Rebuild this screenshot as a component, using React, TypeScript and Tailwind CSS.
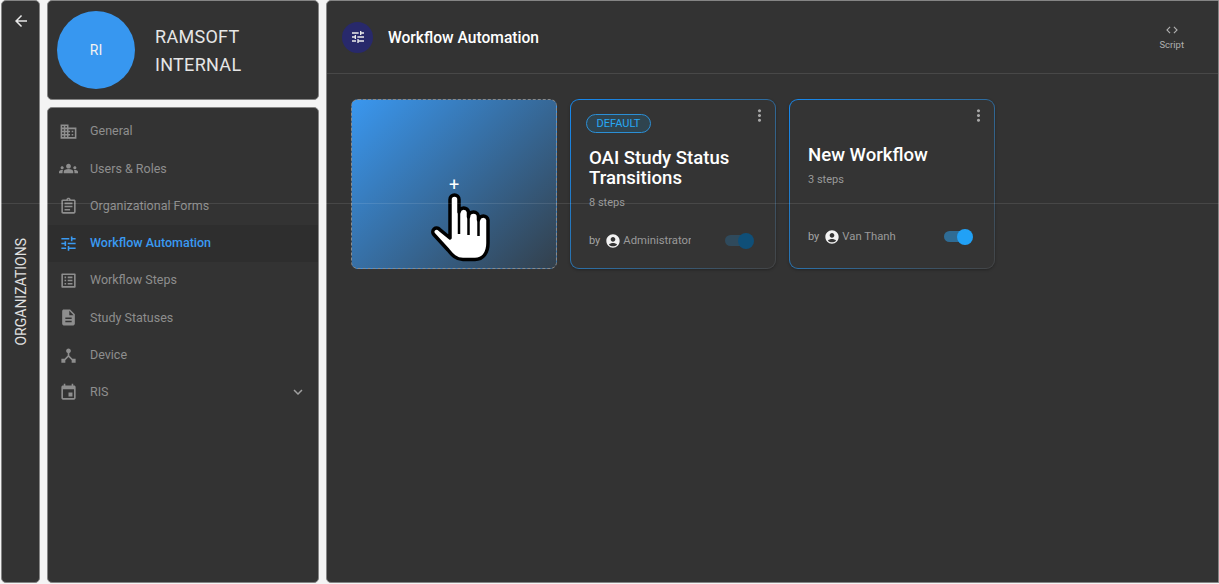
import type { ReactNode } from "react"

const ICONS: Record<string, string> = {
  domain:
    "M12 7V3H2v18h20V7H12zM6 19H4v-2h2v2zm0-4H4v-2h2v2zm0-4H4V9h2v2zm0-4H4V5h2v2zm4 12H8v-2h2v2zm0-4H8v-2h2v2zm0-4H8V9h2v2zm0-4H8V5h2v2zm10 12h-8v-2h2v-2h-2v-2h2v-2h-2V9h8v10zm-2-8h-2v2h2v-2zm0 4h-2v2h2v-2z",
  groups:
    "M12 12.75c1.63 0 3.07.39 4.24.9 1.08.48 1.76 1.56 1.76 2.73V18H6v-1.61c0-1.18.68-2.26 1.76-2.73 1.17-.52 2.61-.91 4.24-.91zM4 13c1.1 0 2-.9 2-2s-.9-2-2-2-2 .9-2 2 .9 2 2 2zm1.13 1.1c-.37-.06-.74-.1-1.13-.1-.99 0-1.93.21-2.78.58C.48 14.9 0 15.62 0 16.43V18h4.5v-1.61c0-.83.23-1.61.63-2.29zM20 13c1.1 0 2-.9 2-2s-.9-2-2-2-2 .9-2 2 .9 2 2 2zm4 3.43c0-.81-.48-1.53-1.22-1.85-.85-.37-1.79-.58-2.78-.58-.39 0-.76.04-1.13.1.4.68.63 1.46.63 2.29V18H24v-1.57zM12 6c1.66 0 3 1.34 3 3s-1.34 3-3 3-3-1.34-3-3 1.34-3 3-3z",
  assignment:
    "M7 15h7v2H7zm0-4h10v2H7zm0-4h10v2H7zm12-4h-4.18C14.4 1.84 13.3 1 12 1c-1.3 0-2.4.84-2.82 2H5c-.14 0-.27.01-.4.04-.39.08-.74.28-1.01.55-.18.18-.33.4-.43.64-.1.23-.16.49-.16.77v14c0 .27.06.54.16.78s.25.45.43.64c.27.27.62.47 1.01.55.13.02.26.03.4.03h14c1.1 0 2-.9 2-2V5c0-1.1-.9-2-2-2zm-7-.25c.41 0 .75.34.75.75s-.34.75-.75.75-.75-.34-.75-.75.34-.75.75-.75zM19 19H5V5h14v14z",
  tune: "M3 17v2h6v-2H3zM3 5v2h10V5H3zm10 16v-2h8v-2h-8v-2h-2v6h2zM7 9v2H3v2h4v2h2V9H7zm14 4v-2H11v2h10zm-6-4h2V7h4V5h-4V3h-2v6z",
  listAlt:
    "M19 5v14H5V5h14m1.1-2H3.9c-.5 0-.9.4-.9.9v16.2c0 .4.4.9.9.9h16.2c.4 0 .9-.5.9-.9V3.9c0-.5-.5-.9-.9-.9zM11 7h6v2h-6V7zm0 4h6v2h-6v-2zm0 4h6v2h-6zM7 7h2v2H7zm0 4h2v2H7zm0 4h2v2H7z",
  description:
    "M14 2H6c-1.1 0-1.99.9-1.99 2L4 20c0 1.1.89 2 1.99 2H18c1.1 0 2-.9 2-2V8l-6-6zm2 16H8v-2h8v2zm0-4H8v-2h8v2zm-3-5V3.5L18.5 9H13z",
  deviceHub:
    "M17 16l-4-4V8.82C14.16 8.4 15 7.3 15 6c0-1.66-1.34-3-3-3S9 4.34 9 6c0 1.3.84 2.4 2 2.82V12l-4 4H3v5h5v-3.05l4-4.2 4 4.2V21h5v-5h-4z",
  event:
    "M17 12h-5v5h5v-5zM16 1v2H8V1H6v2H5c-1.11 0-1.99.9-1.99 2L3 19c0 1.1.89 2 2 2h14c1.1 0 2-.9 2-2V5c0-1.1-.9-2-2-2h-1V1h-2zm3 18H5V8h14v11z",
  account:
    "M12 2C6.48 2 2 6.48 2 12s4.48 10 10 10 10-4.48 10-10S17.52 2 12 2zm0 4c1.93 0 3.5 1.57 3.5 3.5S13.93 13 12 13s-3.5-1.57-3.5-3.5S10.07 6 12 6zm0 14c-2.03 0-4.43-.82-6.14-2.88C7.55 15.8 9.68 15 12 15s4.45.8 6.14 2.12C16.43 19.18 14.03 20 12 20z",
  more: "M12 8c1.1 0 2-.9 2-2s-.9-2-2-2-2 .9-2 2 .9 2 2 2zm0 2c-1.1 0-2 .9-2 2s.9 2 2 2 2-.9 2-2-.9-2-2-2zm0 6c-1.1 0-2 .9-2 2s.9 2 2 2 2-.9 2-2-.9-2-2-2z",
  chevron: "M16.59 8.59 12 13.17 7.41 8.59 6 10l6 6 6-6z",
  back: "M20 11H7.83l5.59-5.59L12 4l-8 8 8 8 1.41-1.41L7.83 13H20v-2z",
  code: "M9.4 16.6 4.8 12l4.6-4.6L8 6l-6 6 6 6 1.4-1.4zm5.2 0 4.6-4.6-4.6-4.6L16 6l6 6-6 6-1.4-1.4z",
}

function Icon({ name, className }: { name: string; className?: string }) {
  return (
    <svg viewBox="0 0 24 24" fill="currentColor" className={className}>
      <path d={ICONS[name]} />
    </svg>
  )
}

const navItems = [
  { label: "General", icon: "domain" },
  { label: "Users & Roles", icon: "groups" },
  { label: "Organizational Forms", icon: "assignment" },
  { label: "Workflow Automation", icon: "tune", active: true },
  { label: "Workflow Steps", icon: "listAlt" },
  { label: "Study Statuses", icon: "description" },
  { label: "Device", icon: "deviceHub" },
  { label: "RIS", icon: "event", expandable: true },
]

function Panel({ className, children }: { className?: string; children?: ReactNode }) {
  return (
    <div className={`rounded-[5px] border border-[#858585] bg-[#333333] ${className ?? ""}`}>
      {children}
    </div>
  )
}

function HandCursor() {
  return (
    <svg width="60" height="70" viewBox="0 0 60 70" className="absolute left-[79px] top-[93px]">
      <path
        d="M19 45V6.5a4.5 4.5 0 0 1 9 0V19a4.8 4.8 0 0 1 9.5 0V24a4.8 4.8 0 0 1 10 0V27a4.8 4.8 0 0 1 9.5 0V50C57 60 52 66.5 44 66.5H32C25 66.5 21 62 17 57L2.8 41.5a3.8 3.8 0 0 1 5.7-5.2Z"
        fill="#fff"
        stroke="#000"
        strokeWidth="3.5"
        strokeLinejoin="round"
      />
      <path d="M28 19V41M37.5 24V42M47.5 27V43" fill="none" stroke="#000" strokeWidth="2.5" />
    </svg>
  )
}

function Toggle({ on }: { on: boolean }) {
  return (
    <div className="relative h-[11px] w-[28px] rounded-full">
      <div className={`h-full w-full rounded-full ${on ? "bg-[#2f6c95]" : "bg-[#2f4a5c]"}`} />
      <div
        className={`absolute right-[-1px] top-[-2.5px] h-4 w-4 rounded-full ${
          on ? "bg-[#21a1f6]" : "bg-[#0f4f78]"
        }`}
      />
    </div>
  )
}

function WorkflowCard({
  name,
  steps,
  author,
  isDefault,
  on,
}: {
  name: string
  steps: string
  author: string
  isDefault?: boolean
  on: boolean
}) {
  return (
    <div className="relative flex h-[170px] w-[206px] flex-col rounded-[9px] border border-transparent px-[18px] shadow-[0_1px_3px_rgba(0,0,0,0.3)] [background:linear-gradient(#343434,#343434)_padding-box,linear-gradient(135deg,#1688ee_0%,#2a72ad_45%,#444444_100%)_border-box]">
      <Icon name="more" className="absolute right-[6px] top-[6px] h-[19px] w-[19px] text-[#a8a8a8]" />
      {isDefault ? (
        <div className="mt-[14px] flex h-[19px] w-[65px] -translate-x-[3px] items-center justify-center rounded-full border border-[#2b8fd6] bg-[#2f444f] pt-px text-[11px] text-[#27a8f5]">
          DEFAULT
        </div>
      ) : null}
      <div
        className={`text-[18.6px] font-medium leading-[20px] text-white ${
          isDefault ? "mt-[15px]" : "mt-[45px]"
        }`}
      >
        {name}
      </div>
      <div className="mt-[8px] text-[11px] leading-[14px] text-[#9a9a9a]">{steps}</div>
      <div className={`flex items-center ${isDefault ? "mt-[22px]" : "mt-[41px]"}`}>
        <span className="pt-px text-[11px] text-[#a5a5a5]">by</span>
        <Icon name="account" className="ml-[5px] h-[16px] w-[16px] text-[#f2f2f2]" />
        <span className="ml-[2px] w-[68px] overflow-hidden whitespace-nowrap pt-px text-[11.3px] text-[#9a9a9a]">
          {author}
        </span>
        <div className="ml-auto mr-[4px]">
          <Toggle on={on} />
        </div>
      </div>
    </div>
  )
}

export default function App() {
  return (
    <div className="relative flex h-[584px] w-[1219px] gap-[7px] overflow-hidden bg-[#f4f4f4] pb-px pl-px font-['Roboto',sans-serif]">
      {/* organizations rail */}
      <Panel className="relative w-[39px] shrink-0">
        <Icon name="back" className="mx-auto mt-[11px] h-[18px] w-[18px] text-[#e8e8e8]" />
        <div className="absolute left-[11px] top-[237px] text-[14px] leading-[16px] text-[#e0e0e0] [transform:rotate(180deg)] [writing-mode:vertical-rl]">
          ORGANIZATIONS
        </div>
      </Panel>

      {/* org card + nav */}
      <div className="flex w-[272px] shrink-0 flex-col gap-[7px]">
        <Panel className="flex h-[100px] shrink-0 items-center pl-[9px]">
          <div className="flex h-[78px] w-[78px] items-center justify-center rounded-full bg-[#3797f0] text-[14px] text-[#f2f2f2]">
            RI
          </div>
          <div className="ml-[20px] w-[120px] pt-[2px] text-[18px] leading-[28px] tracking-[0.3px] text-[#e6e6e6]">
            RAMSOFT INTERNAL
          </div>
        </Panel>
        <Panel className="flex-1 pt-[5px]">
          {navItems.map((item) => (
            <div
              key={item.label}
              className={`flex h-[37.25px] items-center pl-[10.5px] pr-[11px] ${
                item.active ? "bg-[#2e2e2e] font-medium text-[#3a9af2]" : "text-[#8e8e8e]"
              }`}
            >
              <Icon name={item.icon} className="h-[19px] w-[19px]" />
              <span className="ml-[12.5px] text-[12.5px]">{item.label}</span>
              {item.expandable ? (
                <Icon name="chevron" className="ml-auto h-[18px] w-[18px] text-[#a0a0a0]" />
              ) : null}
            </div>
          ))}
        </Panel>
      </div>

      {/* main */}
      <Panel className="flex-1 rounded-r-none">
        <div className="flex h-[73px] items-center border-b border-[#484848] pl-[15px] pr-[34px]">
          <div className="flex h-[31px] w-[31px] items-center justify-center rounded-full bg-[#28296b]">
            <Icon name="tune" className="h-[16px] w-[16px] text-[#ececec]" />
          </div>
          <div className="ml-[15px] pt-[3px] text-[15.6px] font-medium text-white">Workflow Automation</div>
          <div className="ml-auto flex flex-col items-center text-[#b0b0b0]">
            <Icon name="code" className="h-[14px] w-[14px]" />
            <span className="mt-[2px] text-[9.5px] leading-[12px]">Script</span>
          </div>
        </div>
        <div className="flex gap-[13px] pl-[24px] pt-[25px]">
          <div className="relative h-[170px] w-[206px] rounded-[7px] border border-dashed border-[#8a8a8a] bg-[linear-gradient(135deg,#3a97ef_0%,#33404c_100%)]">
            <span className="absolute left-[97px] top-[77px] text-[18px] leading-[16px] text-white">+</span>
            <HandCursor />
          </div>
          <WorkflowCard
            name="OAI Study Status Transitions"
            steps="8 steps"
            author="Administrator"
            isDefault
            on={false}
          />
          <WorkflowCard name="New Workflow" steps="3 steps" author="Van Thanh" on />
        </div>
      </Panel>

      {/* faint guide line lying over the whole page */}
      <div className="pointer-events-none absolute left-0 right-0 top-[203px] h-px bg-white/10" />
    </div>
  )
}
